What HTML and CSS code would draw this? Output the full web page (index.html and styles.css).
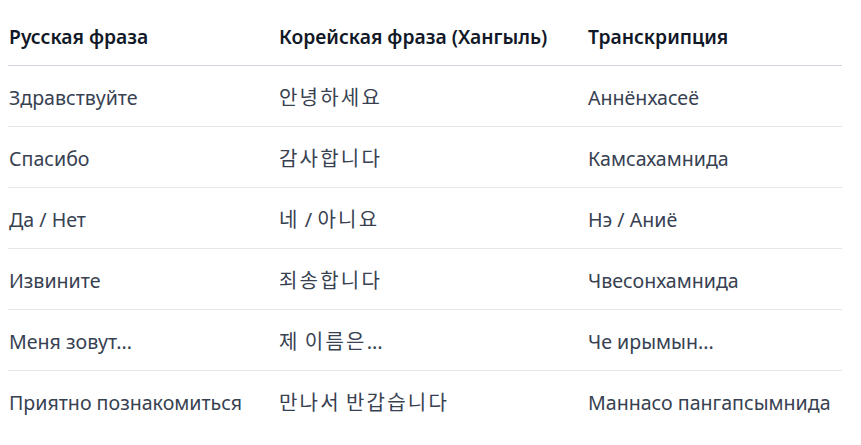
FILE: index.html
```html
<!DOCTYPE html>
<html lang="ru">
<head>
<meta charset="utf-8">
<link rel="stylesheet" href="styles.css">
</head>
<body>
<table class="phrases">
  <colgroup>
    <col class="c1"><col class="c2"><col class="c3">
  </colgroup>
  <thead>
    <tr><th>Русская фраза</th><th>Корейская фраза (Хангыль)</th><th>Транскрипция</th></tr>
  </thead>
  <tbody>
    <tr><td>Здравствуйте</td><td class="ko"><span class="hg">안녕하세요</span></td><td>Аннёнхасеё</td></tr>
    <tr><td>Спасибо</td><td class="ko"><span class="hg">감사합니다</span></td><td>Камсахамнида</td></tr>
    <tr><td>Да / Нет</td><td class="ko"><span class="hg">네</span> / <span class="hg">아니요</span></td><td>Нэ / Аниё</td></tr>
    <tr><td>Извините</td><td class="ko"><span class="hg">죄송합니다</span></td><td>Чвесонхамнида</td></tr>
    <tr><td>Меня зовут...</td><td class="ko"><span class="hg">제</span> <span class="hg">이름은</span>...</td><td>Че ирымын...</td></tr>
    <tr><td>Приятно познакомиться</td><td class="ko"><span class="hg">만나서</span> <span class="hg">반갑습니다</span></td><td>Маннасо пангапсымнида</td></tr>
  </tbody>
</table>
</body>
</html>
```
FILE: styles.css
```css
body {
  margin: 8px;
  background: #ffffff;
  font-family: "Noto Sans", "Noto Sans CJK KR", sans-serif;
}
.phrases {
  border-collapse: collapse;
  table-layout: fixed;
  width: 834px;
  font-size: 19.6px;
  line-height: 27px;
}
.c1 { width: 270px; }
.c2 { width: 309px; }
.c3 { width: 255px; }
.phrases th {
  text-align: left;
  font-weight: 600;
  font-size: 19.3px;
  color: #111827;
  padding: 15px 0 15px 1px;
  border-bottom: 1px solid #d1d5db;
}
.phrases td {
  color: #374151;
  padding: 18px 0 15px 1px;
  border-bottom: 1px solid #e5e7eb;
  white-space: nowrap;
}
.phrases tbody tr:last-child td {
  border-bottom: none;
}
.phrases td.ko {
  font-size: 20px;
}
.hg {
  font-family: "Noto Sans CJK KR", sans-serif;
  letter-spacing: 2.2px;
  line-height: 18px;
}
```
